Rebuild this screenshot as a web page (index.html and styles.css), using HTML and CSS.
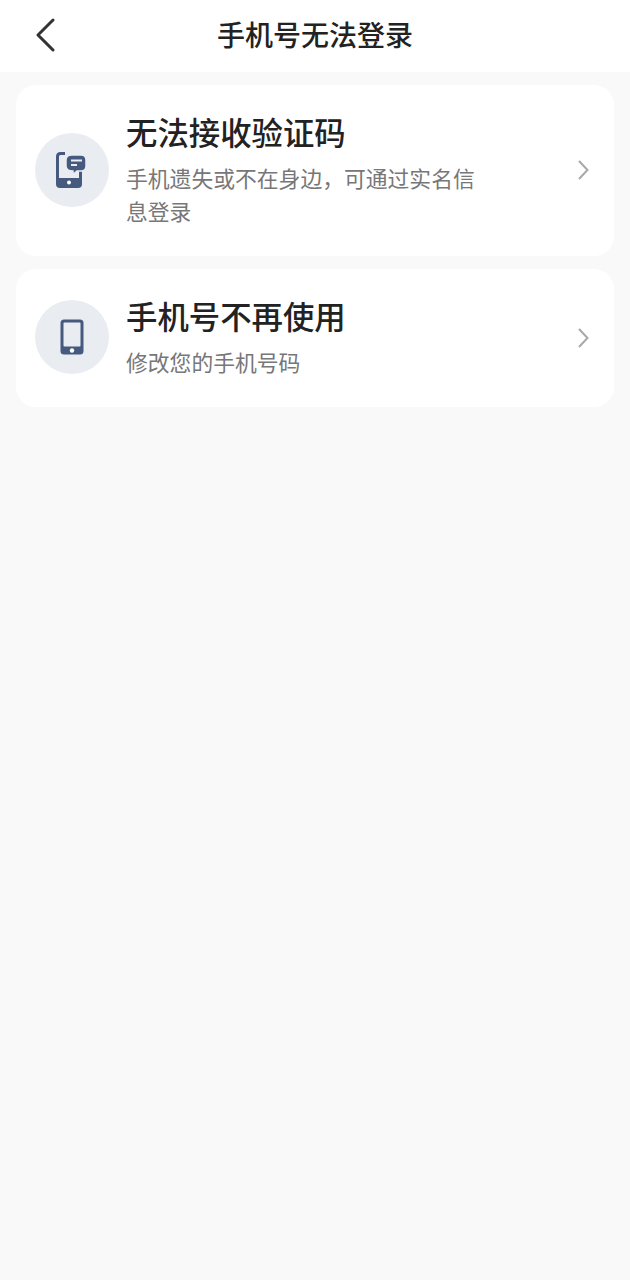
FILE: index.html
```html
<!DOCTYPE html>
<html lang="zh-CN">
  <head>
    <meta charset="UTF-8" />
    <meta name="viewport" content="width=device-width, initial-scale=1.0" />
    <title>手机号无法登录</title>
    <link rel="stylesheet" href="styles.css">
  </head>

  <body>
    <header class="topbar">
      <svg class="back" width="20" height="34" viewBox="0 0 20 34">
        <path d="M18 2 L3 17 L18 32" fill="none" stroke="#333" stroke-width="3" stroke-linecap="round" stroke-linejoin="round" />
      </svg>
      <h1>手机号无法登录</h1>
    </header>

    <main class="list">
      <div class="card">
        <div class="icon-circle">
          <svg width="32" height="36" viewBox="0 0 32 36">
            <path d="M9 1.500 H4.500 Q1.500 1.500 1.500 4.500 V28 H24.500 V18" fill="none" stroke="#46597f" stroke-width="3" />
            <path d="M0 26 H26 V32 Q26 36 22 36 H4 Q0 36 0 32 Z" fill="#46597f" />
            <circle cx="13" cy="30.500" r="2" fill="#fff" />
            <path d="M16 3 H25 Q30 3 30 8 V14 Q30 19 25 19 H21 L17 22.500 L17 19 Q10 19 10 14 V8 Q10 3 16 3 Z" fill="#46597f" stroke="#e9edf2" stroke-width="1.500" />
            <path d="M15 8.500 H26 M15 13 H21" stroke="#e9edf2" stroke-width="2" />
          </svg>
        </div>
        <div class="text">
          <h2>无法接收验证码</h2>
          <p>手机遗失或不在身边，可通过实名信息登录</p>
        </div>
        <svg class="arrow" width="12" height="22" viewBox="0 0 12 22">
          <path d="M2 2 L10.5 11 L2 20" fill="none" stroke="#a8a8a8" stroke-width="2" />
        </svg>
      </div>

      <div class="card">
        <div class="icon-circle">
          <svg width="24" height="36" viewBox="0 0 24 36">
            <path d="M4 .5 H20 Q23.500 .5 23.500 4 V32 Q23.500 35.500 20 35.500 H4 Q.5 35.500 .5 32 V4 Q.5 .5 4 .5 Z" fill="#46597f" />
            <rect x="3.500" y="3.500" width="17" height="24" rx="1" fill="#e9edf2" />
            <circle cx="12" cy="31.500" r="2.200" fill="#fff" />
          </svg>
        </div>
        <div class="text">
          <h2>手机号不再使用</h2>
          <p>修改您的手机号码</p>
        </div>
        <svg class="arrow" width="12" height="22" viewBox="0 0 12 22">
          <path d="M2 2 L10.5 11 L2 20" fill="none" stroke="#a8a8a8" stroke-width="2" />
        </svg>
      </div>
    </main>
  </body>
</html>
```

FILE: styles.css
```css
body {
  margin: 0;
  min-height: 1280px;
  background-color: #f9f9f9;
  font-family: "Noto Sans CJK SC", "Noto Sans", sans-serif;
}

.topbar {
  height: 68px;
  padding-bottom: 4px;
  background-color: white;
  display: flex;
  align-items: center;
  justify-content: center;
  position: relative;
}

.topbar h1 {
  margin: 0;
  font-size: 28px;
  font-weight: 500;
  color: #222;
}

.back {
  position: absolute;
  left: 35px;
  top: 18px;
}

.list {
  padding: 13px 16px;
  display: flex;
  flex-direction: column;
  gap: 13px;
}

.card {
  background-color: white;
  border-radius: 20px;
  padding: 27px 25px 29px 19px;
  display: flex;
  align-items: center;
}

.icon-circle {
  width: 74px;
  height: 74px;
  flex-shrink: 0;
  border-radius: 50%;
  background-color: #e9edf2;
  display: flex;
  align-items: center;
  justify-content: center;
}

.arrow {
  margin-top: 1px;
}

.text {
  margin-left: 17px;
  flex: 1;
}

.text h2 {
  margin: 0 0 9px;
  font-size: 31.4px;
  line-height: 40px;
  font-weight: 500;
  color: #222;
}

.text p {
  margin: 0;
  max-width: 360px;
  font-size: 21.8px;
  line-height: 33px;
  color: #777;
}
```
